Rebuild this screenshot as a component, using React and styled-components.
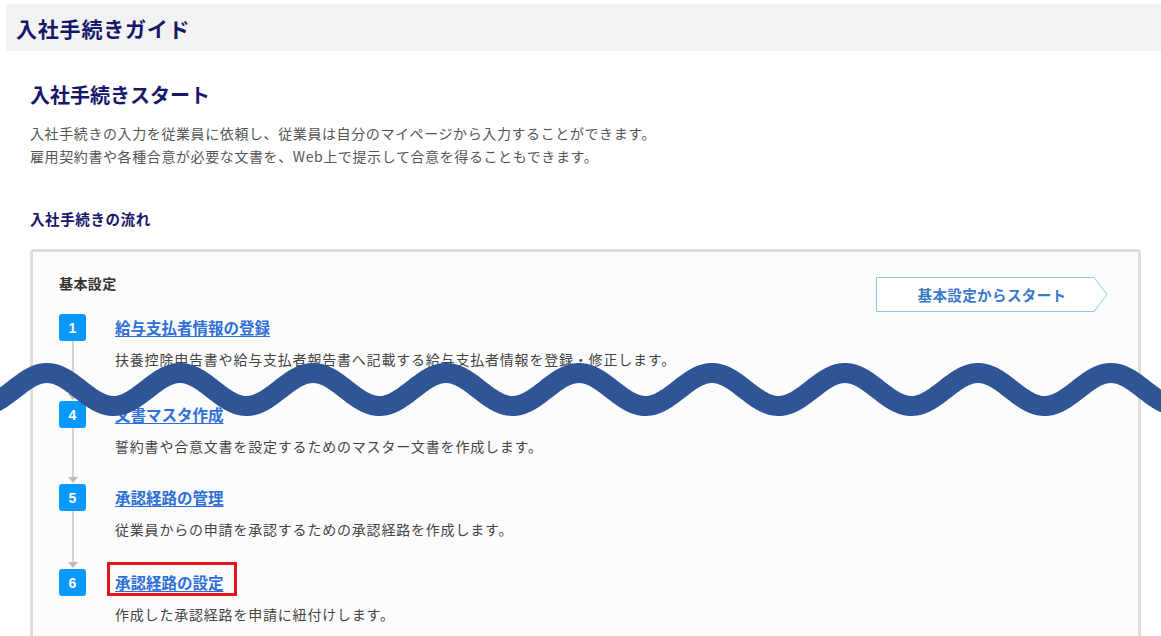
import React from "react";
import styled, { createGlobalStyle } from "styled-components";

const GlobalStyle = createGlobalStyle`
  html, body { margin: 0; padding: 0; background: #ffffff; }
  body {
    font-family: "Noto Sans CJK JP", "Noto Sans", sans-serif;
    -webkit-font-smoothing: antialiased;
  }
  * { box-sizing: border-box; }
`;

const Page = styled.div`
  position: relative;
  width: 1161px;
  height: 636px;
  overflow: hidden;
  padding: 4px 0 0 6px;
`;

const Header = styled.header`
  height: 47px;
  background: #f2f2f2;
  display: flex;
  align-items: center;
  padding-left: 10px;
`;

const HeaderTitle = styled.h1`
  margin: 0;
  font-size: 21px;
  line-height: 28px;
  font-weight: 700;
  letter-spacing: 0.8px;
  color: #16166a;
`;

const Main = styled.main`
  padding: 0 20px 0 24px;
`;

const PageTitle = styled.h2`
  margin: 29px 0 0;
  font-size: 20px;
  line-height: 30px;
  font-weight: 700;
  color: #16166a;
`;

const Lead = styled.p`
  margin: 12px 0 0;
  font-size: 14px;
  line-height: 23px;
  letter-spacing: 0.6px;
  color: #555555;
`;

const SectionTitle = styled.h3`
  margin: 41px 0 0;
  font-size: 14.5px;
  line-height: 20px;
  font-weight: 700;
  letter-spacing: 0.6px;
  color: #16166a;
`;

const FlowBox = styled.section`
  margin-top: 20px;
  border: 3px solid #dddddd;
  border-radius: 4px;
  background: #fcfcfc;
  padding: 21px 30px 0 26px;
  height: 420px;
`;

const BoxHead = styled.div`
  display: flex;
  justify-content: space-between;
  align-items: flex-start;
  height: 41px;
`;

const GroupLabel = styled.div`
  font-size: 14px;
  line-height: 20px;
  font-weight: 700;
  color: #333333;
  letter-spacing: 0.4px;
`;

const StartButton = styled.a`
  position: relative;
  margin-top: 4px;
  width: 232px;
  height: 35px;
  display: flex;
  align-items: center;
  justify-content: center;
  font-size: 14.5px;
  font-weight: 700;
  color: #3a79c6;
  letter-spacing: 0.4px;
  text-decoration: none;
  cursor: pointer;
  svg {
    position: absolute;
    inset: 0;
    z-index: 0;
  }
  span {
    position: relative;
    z-index: 1;
  }
`;

const StepList = styled.ol`
  list-style: none;
  margin: 0;
  padding: 0;
`;

const Step = styled.li`
  display: grid;
  grid-template-columns: 27px 1fr;
  column-gap: 29px;
  height: ${(p) => (p.$h ? `${p.$h}px` : "auto")};
`;

const Rail = styled.div`
  display: flex;
  flex-direction: column;
  align-items: center;
`;

const Badge = styled.div`
  width: 27px;
  height: 27px;
  flex: none;
  border-radius: 3px;
  background: #0899ff;
  color: #ffffff;
  font-family: "Liberation Sans", Arial, sans-serif;
  font-weight: 700;
  font-size: 14px;
  display: flex;
  align-items: center;
  justify-content: center;
`;

const Connector = styled.div`
  position: relative;
  flex: 1;
  width: 2px;
  background: #d4d4d4;
  margin-bottom: 2px;
  &::after {
    content: "";
    position: absolute;
    left: 50%;
    bottom: -1px;
    transform: translateX(-50%);
    border-left: 5px solid transparent;
    border-right: 5px solid transparent;
    border-top: 6px solid #bdbdbd;
  }
`;

const StepBody = styled.div`
  display: flex;
  flex-direction: column;
  align-items: flex-start;
`;

const StepTitle = styled.a`
  position: relative;
  display: inline-block;
  font-size: 15.5px;
  line-height: 26px;
  font-weight: 700;
  color: #2e6fd9;
  text-decoration: underline;
  text-underline-offset: 2px;
  text-decoration-thickness: 1px;
  cursor: pointer;
  ${(p) =>
    p.$highlight &&
    `
    &::after {
      content: "";
      position: absolute;
      left: -8px;
      right: -13px;
      top: -7px;
      bottom: -1px;
      border: 3px solid #e8141b;
    }
  `}
`;

const StepDesc = styled.p`
  margin: 9px 0 0;
  font-size: 14px;
  line-height: 20px;
  letter-spacing: 0.8px;
  color: #444444;
`;

const WaveLayer = styled.svg`
  position: absolute;
  left: 0;
  top: 350px;
  width: 1161px;
  height: 80px;
  pointer-events: none;
`;

const steps = [
  {
    n: 1,
    title: "給与支払者情報の登録",
    desc: "扶養控除申告書や給与支払者報告書へ記載する給与支払者情報を登録・修正します。",
    h: 87,
  },
  {
    n: 4,
    title: "文書マスタ作成",
    desc: "誓約書や合意文書を設定するためのマスター文書を作成します。",
    h: 83,
  },
  {
    n: 5,
    title: "承認経路の管理",
    desc: "従業員からの申請を承認するための承認経路を作成します。",
    h: 85,
  },
  {
    n: 6,
    title: "承認経路の設定",
    desc: "作成した承認経路を申請に紐付けします。",
    highlight: true,
  },
];

function wavePath() {
  const pts = [];
  for (let x = -20; x <= 1181; x += 2) {
    const y = 39.5 - 16.5 * Math.cos((2 * Math.PI * (x - 47)) / 133);
    pts.push(`${x},${y.toFixed(2)}`);
  }
  return "M" + pts.join(" L");
}

function Wave() {
  const d = wavePath();
  return (
    <WaveLayer viewBox="0 0 1161 80" aria-hidden="true">
      <path d={d} fill="none" stroke="#2f5597" strokeWidth="20" strokeLinecap="butt" strokeLinejoin="round" />
    </WaveLayer>
  );
}

export default function App() {
  return (
    <>
      <GlobalStyle />
      <Page>
        <Header>
          <HeaderTitle>入社手続きガイド</HeaderTitle>
        </Header>
        <Main>
          <PageTitle>入社手続きスタート</PageTitle>
          <Lead>
            入社手続きの入力を従業員に依頼し、従業員は自分のマイページから入力することができます。
            <br />
            雇用契約書や各種合意が必要な文書を、Web上で提示して合意を得ることもできます。
          </Lead>
          <SectionTitle>入社手続きの流れ</SectionTitle>
          <FlowBox>
            <BoxHead>
              <GroupLabel>基本設定</GroupLabel>
              <StartButton>
                <svg width="232" height="35" viewBox="0 0 232 35">
                  <polygon
                    points="0.5,0.5 218,0.5 231,17.5 218,34.5 0.5,34.5"
                    fill="#ffffff"
                    stroke="#8cc8ec"
                    strokeWidth="1"
                  />
                </svg>
                <span>基本設定からスタート</span>
              </StartButton>
            </BoxHead>
            <StepList>
              {steps.map((s, i) => (
                <Step key={s.n} $h={s.h}>
                  <Rail>
                    <Badge>{s.n}</Badge>
                    {i < steps.length - 1 && <Connector />}
                  </Rail>
                  <StepBody>
                    <StepTitle $highlight={s.highlight}>{s.title}</StepTitle>
                    <StepDesc>{s.desc}</StepDesc>
                  </StepBody>
                </Step>
              ))}
            </StepList>
          </FlowBox>
        </Main>
        <Wave />
      </Page>
    </>
  );
}
